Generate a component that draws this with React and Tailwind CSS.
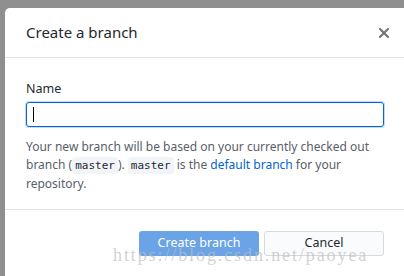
import React from "react";

export default function App() {
  return (
    <div className="relative w-[404px] h-[276px] overflow-hidden bg-[#8f8f8f] pt-[8px] pl-[5px]" style={{ fontFamily: '"Noto Sans", "Open Sans", sans-serif' }}>
      <div className="flex h-full flex-col rounded-tl-[5px] bg-white">
        <div className="flex h-[50px] shrink-0 items-center justify-between border-b border-[#e1e4e8] pl-[21px] pr-[15px]">
          <h1 className="text-[15px] leading-none text-[#24292e]">Create a branch</h1>
          <svg width="10" height="10" viewBox="0 0 10 10" className="text-[#6a737d]">
            <path d="M1 1L9 9M9 1L1 9" stroke="currentColor" strokeWidth="2" strokeLinecap="square" />
          </svg>
        </div>
        <div className="h-[152px] shrink-0 border-b border-[#e1e4e8] pl-[21px] pt-[22px]">
          <label className="block text-[12.5px] leading-[18px] text-[#24292e]">Name</label>
          <div className="mt-[4px] flex h-[25px] w-[358px] items-center rounded-[3px] border border-[#0366d6] pl-[6px] shadow-[0_0_0_1px_rgba(3,102,214,0.25)]">
            <span className="h-[15px] w-px bg-black" />
          </div>
          <p className="mt-[11px] w-[360px] text-[12px] leading-[18px] text-[#586069]">
            Your new branch will be based on your currently checked out branch (
            <code className="rounded-[3px] bg-[#f1f4f8] px-[3px] py-[2px] text-[11px] text-[#24292e]" style={{ fontFamily: '"DejaVu Sans Mono", monospace' }}>master</code>
            ).{" "}
            <code className="rounded-[3px] bg-[#f1f4f8] px-[3px] py-[2px] text-[11px] text-[#24292e]" style={{ fontFamily: '"DejaVu Sans Mono", monospace' }}>master</code>
            {" "}is the <span className="text-[#0366d6]">default branch</span> for your repository.
          </p>
        </div>
        <div className="flex gap-[5px] pl-[134px] pt-[21px]">
          <button className="h-[25px] w-[120px] rounded-[3px] bg-[#6aa3e6] text-[12.5px] text-white">Create branch</button>
          <button className="h-[25px] w-[120px] rounded-[3px] border border-[#d6d9dd] bg-[#fafbfc] text-[12.5px] text-[#24292e]">Cancel</button>
        </div>
      </div>
      <div className="pointer-events-none absolute left-[113px] top-[246px] whitespace-nowrap text-[18px] leading-none tracking-[1.9px] text-[#bdbdbd]/70" style={{ fontFamily: '"Liberation Serif", serif' }}>
        https://blog.csdn.net/paoyea
      </div>
    </div>
  );
}
